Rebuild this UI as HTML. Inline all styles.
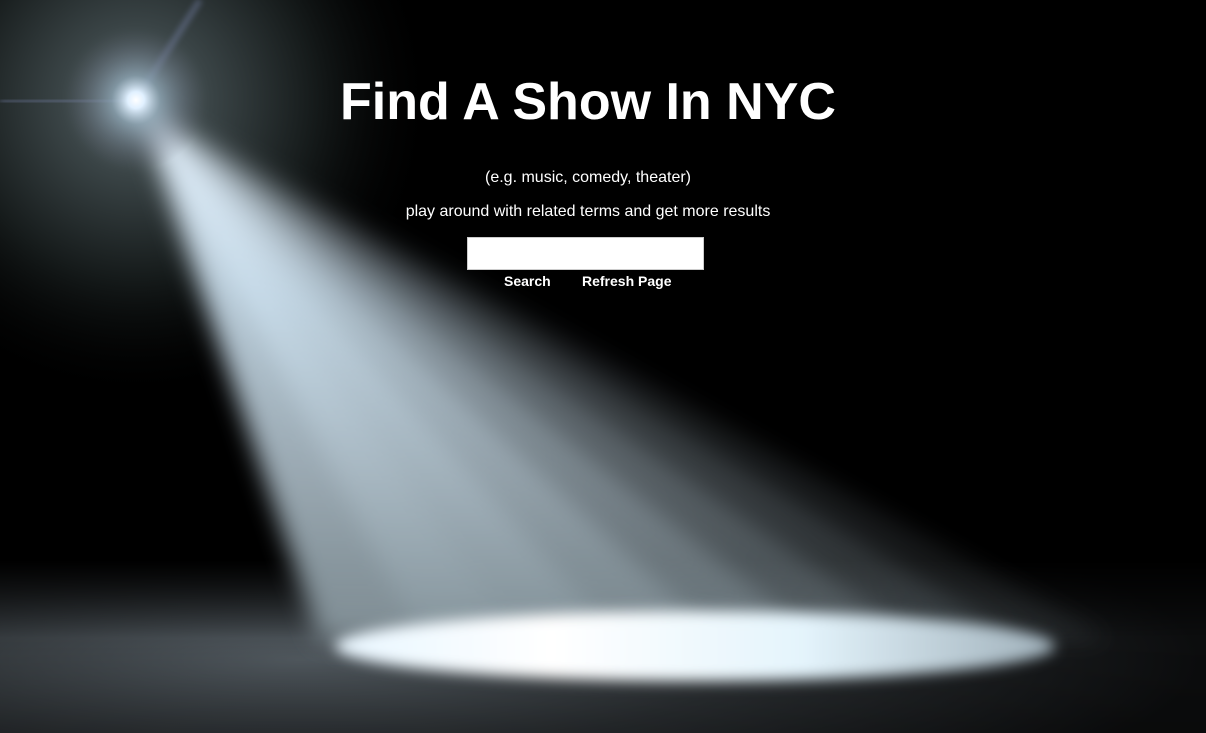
<!DOCTYPE html>
<html><head><style>
html,body{margin:0;padding:0;width:1206px;height:733px;overflow:hidden;background:#000;font-family:"Liberation Sans",Arial,sans-serif;color:#fff}
svg{position:absolute;left:0;top:0}
.c{position:absolute;left:0;width:1176px;text-align:center}
h1{position:absolute;top:72px;left:0;width:1176px;text-align:center;margin:0;font-size:52px;font-weight:bold}
input{position:absolute;left:467px;top:237px;width:237px;height:33px;border:1px solid #ccc;background:#fff;box-sizing:border-box;margin:0}
.b{position:absolute;top:273px;font-size:14px;font-weight:bold}
</style></head><body>
<svg width="1206" height="733">
<defs>
<radialGradient id="glow" cx="136" cy="100" r="300" gradientUnits="userSpaceOnUse">
<stop offset="0" stop-color="#6a7a7e"/><stop offset=".25" stop-color="#3a4446"/><stop offset=".6" stop-color="#151a1a"/><stop offset="1" stop-color="#000" stop-opacity="0"/></radialGradient>
<radialGradient id="floorg" cx="300" cy="660" r="900" gradientTransform="translate(300 660) scale(1 0.2) translate(-300 -660)" gradientUnits="userSpaceOnUse">
<stop offset="0" stop-color="#525a60"/><stop offset=".5" stop-color="#2a2e31"/><stop offset="1" stop-color="#0c0d0e"/></radialGradient>
<linearGradient id="fv" x1="0" y1="560" x2="0" y2="733" gradientUnits="userSpaceOnUse">
<stop offset="0" stop-color="#fff" stop-opacity="0"/><stop offset=".45" stop-color="#fff" stop-opacity="1"/><stop offset="1" stop-color="#fff" stop-opacity=".8"/></linearGradient>
<mask id="fm"><rect width="1206" height="733" fill="url(#fv)"/></mask>
<linearGradient id="beam" x1="0" y1="100" x2="0" y2="640" gradientUnits="userSpaceOnUse">
<stop offset="0" stop-color="#e8f4ff"/><stop offset=".35" stop-color="#c8dcea"/><stop offset=".7" stop-color="#a6b6c0"/><stop offset="1" stop-color="#84939a"/></linearGradient>
<linearGradient id="spotx" x1="0" y1="0" x2="1" y2="0">
<stop offset="0" stop-color="#e8f6ff"/><stop offset=".3" stop-color="#ffffff"/><stop offset=".65" stop-color="#e4f4fc"/><stop offset="1" stop-color="#9fb0ba"/></linearGradient>
<radialGradient id="spotm" cx="0.5" cy="0.5" r="0.5">
<stop offset="0" stop-color="#fff"/><stop offset=".8" stop-color="#fff"/><stop offset="1" stop-color="#fff" stop-opacity=".3"/></radialGradient>
<mask id="sm" maskContentUnits="objectBoundingBox"><rect width="1" height="1" fill="url(#spotm)"/></mask>
<radialGradient id="src" cx="136" cy="100" r="70" gradientUnits="userSpaceOnUse">
<stop offset="0" stop-color="#fff"/><stop offset=".12" stop-color="#e0f0ff"/><stop offset=".35" stop-color="#90a8b8" stop-opacity=".7"/><stop offset="1" stop-color="#556" stop-opacity="0"/></radialGradient>
<filter id="bl" x="-20%" y="-20%" width="140%" height="140%"><feGaussianBlur stdDeviation="12"/></filter>
<filter id="bl3" x="-20%" y="-50%" width="140%" height="200%"><feGaussianBlur stdDeviation="7"/></filter>
<filter id="bl2"><feGaussianBlur stdDeviation="3"/></filter>
</defs>
<rect width="1206" height="733" fill="url(#glow)"/>
<rect y="540" width="1206" height="193" fill="url(#floorg)" mask="url(#fm)"/>
<g filter="url(#bl)" fill="url(#beam)">
<polygon points="136,100 320,640 420,640" opacity=".92"/>
<polygon points="136,100 420,640 520,640" opacity="1"/>
<polygon points="136,100 520,640 620,640" opacity=".97"/>
<polygon points="136,100 620,640 720,640" opacity=".88"/>
<polygon points="136,100 720,640 820,640" opacity=".72"/>
<polygon points="136,100 820,640 920,640" opacity=".52"/>
<polygon points="136,100 920,640 1020,640" opacity=".32"/>
<polygon points="136,100 1020,640 1110,640" opacity=".14"/>
</g>
<ellipse cx="695" cy="646" rx="360" ry="35" fill="url(#spotx)" filter="url(#bl3)"/>
<line x1="0" y1="102" x2="136" y2="100" stroke="#8a96c8" stroke-width="7" opacity=".3" filter="url(#bl2)"/>
<line x1="136" y1="100" x2="200" y2="0" stroke="#8a96c8" stroke-width="6" opacity=".35" filter="url(#bl2)"/>
<circle cx="136" cy="100" r="70" fill="url(#src)"/>
</svg>
<h1>Find A Show In NYC</h1>
<div class="c" style="top:169px;font-size:16px">(e.g. music, comedy, theater)</div>
<div class="c" style="top:203px;font-size:16px">play around with related terms and get more results</div>
<input type="text">
<div class="b" style="left:504px">Search</div>
<div class="b" style="left:582px">Refresh Page</div>
</body></html>
